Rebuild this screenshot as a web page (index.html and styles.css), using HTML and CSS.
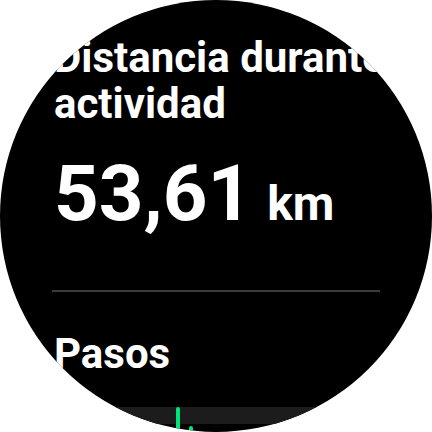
FILE: index.html
```html
<!DOCTYPE html>
<html lang="es">
<head>
<meta charset="utf-8">
<link rel="stylesheet" href="styles.css">
</head>
<body>
<div class="watch">
  <div class="content">
    <h1 class="title">Distancia durante actividad</h1>
    <div class="value"><span class="num">53,61</span><span class="unit">km</span></div>
    <hr class="divider">
    <h2 class="section">Pasos</h2>
    <div class="chart">
      <div class="bar tall"></div>
      <div class="bar short"></div>
    </div>
  </div>
</div>
</body>
</html>
```
FILE: styles.css
```css
html, body {
  margin: 0;
  padding: 0;
  background: #ffffff;
}
.watch {
  width: 432px;
  height: 432px;
  border-radius: 50%;
  background: #000000;
  overflow: hidden;
  font-family: Roboto, "Liberation Sans", sans-serif;
  color: #ffffff;
}
.content {
  padding: 35px 52px 0 54px;
}
.title {
  margin: 0;
  font-size: 42px;
  font-weight: 700;
  line-height: 46px;
  width: 390px;
}
.value {
  margin-top: 27px;
  height: 80px;
  display: flex;
  align-items: baseline;
  gap: 15px;
  font-weight: 700;
}
.num {
  font-size: 78px;
  line-height: 80px;
}
.unit {
  font-size: 48px;
  line-height: 56px;
}
.divider {
  margin: 56px 0 0 -2px;
  border: 0;
  height: 2px;
  background: #3c3c3c;
}
.section {
  margin: 39px 0 0 0;
  font-size: 42px;
  font-weight: 700;
  line-height: 45px;
}
.chart {
  margin-top: 31px;
  margin-left: -54px;
  margin-right: -52px;
  height: 17px;
  background: #1c1c1c;
  position: relative;
}
.bar {
  position: absolute;
  width: 4px;
  background: #00e676;
  border-radius: 2px;
}
.bar.tall {
  left: 176px;
  top: 0;
  height: 40px;
}
.bar.short {
  left: 189px;
  top: 19px;
  height: 20px;
}
```
